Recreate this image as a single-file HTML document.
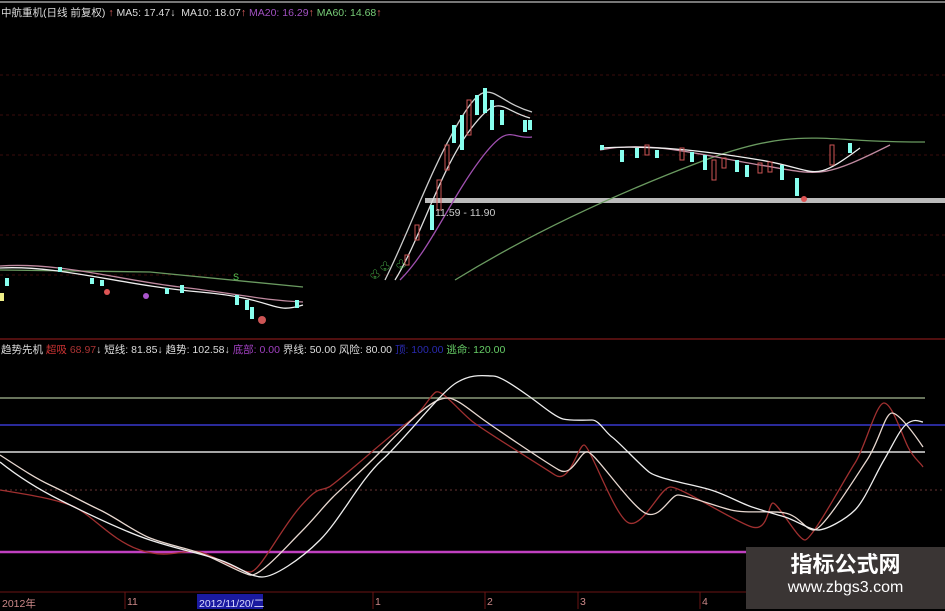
<!DOCTYPE html>
<html><head><meta charset="utf-8"><style>
html,body{margin:0;padding:0;background:#000;}
body{width:945px;height:609px;overflow:hidden;position:relative;font-family:"Liberation Sans","Noto Sans CJK SC",sans-serif;}
.t{position:absolute;font-size:10.5px;white-space:nowrap;color:#ddd;}
.wm{position:absolute;left:746px;top:547px;width:199px;height:62px;background:#3a3534;text-align:center;color:#fff;}
</style></head><body>
<svg width="945" height="609" style="position:absolute;left:0;top:0">
<line x1="0" y1="2" x2="945" y2="2" stroke="#777" stroke-width="2"/>
<g stroke="#3a0c0c" stroke-width="1" stroke-dasharray="3,3">
<line x1="0" y1="75" x2="945" y2="75"/><line x1="0" y1="115" x2="945" y2="115"/>
<line x1="0" y1="155" x2="945" y2="155"/><line x1="0" y1="235" x2="945" y2="235"/>
<line x1="0" y1="275" x2="945" y2="275"/>
</g>
<line x1="0" y1="339" x2="945" y2="339" stroke="#6a1414" stroke-width="1.5"/>
<rect x="425" y="198" width="520" height="5" fill="#bbb"/>
<g fill="none" stroke-width="1.3">
<path d="M0,270 L150,272 L303,287" stroke="#6a9a60"/>
<path d="M0,266 C60,262 120,280 180,287 S260,300 303,302" stroke="#c08aa0"/>
<path d="M0,268 C60,265 120,285 200,292 S270,315 303,305" stroke="#eee"/>
<path d="M455,280 C520,240 600,200 700,162 S820,143 925,142" stroke="#6a9a60"/>
<path d="M400,280 C430,250 450,200 480,160 S510,140 532,137" stroke="#a050b0"/>
<path d="M395,280 C420,240 440,170 470,130 S500,110 530,118" stroke="#ddd"/>
<path d="M385,280 C410,230 430,170 460,120 S490,100 532,112" stroke="#ccc"/>
<path d="M600,150 C650,140 700,155 760,165 S820,180 890,145" stroke="#c08aa0"/>
<path d="M600,148 C650,145 700,150 760,160 S810,185 860,148" stroke="#eee"/>
</g>
<g stroke-width="1">
<rect x="430" y="205" width="4" height="25" fill="#8fe"/><rect x="437" y="180" width="4" height="30" fill="none" stroke="#c55"/>
<rect x="445" y="145" width="4" height="25" fill="none" stroke="#c55"/><rect x="452" y="125" width="4" height="18" fill="#8fe"/>
<rect x="460" y="115" width="4" height="35" fill="#8fe"/><rect x="467" y="100" width="4" height="35" fill="none" stroke="#c55"/>
<rect x="475" y="95" width="4" height="20" fill="#8fe"/><rect x="483" y="88" width="4" height="25" fill="#8fe"/>
<rect x="490" y="100" width="4" height="30" fill="#8fe"/><rect x="500" y="110" width="4" height="15" fill="#8fe"/>
<rect x="523" y="120" width="4" height="12" fill="#8fe"/><rect x="528" y="120" width="4" height="10" fill="#8fe"/>
<rect x="415" y="225" width="4" height="15" fill="none" stroke="#c55"/><rect x="405" y="255" width="4" height="10" fill="none" stroke="#c55"/>
<rect x="620" y="150" width="4" height="12" fill="#8fe"/><rect x="635" y="148" width="4" height="10" fill="#8fe"/>
<rect x="645" y="145" width="4" height="10" fill="none" stroke="#c55"/><rect x="655" y="150" width="4" height="8" fill="#8fe"/>
<rect x="680" y="148" width="4" height="12" fill="none" stroke="#c55"/><rect x="690" y="152" width="4" height="10" fill="#8fe"/>
<rect x="703" y="155" width="4" height="15" fill="#8fe"/><rect x="712" y="160" width="4" height="20" fill="none" stroke="#c55"/>
<rect x="722" y="158" width="4" height="10" fill="none" stroke="#c55"/><rect x="735" y="160" width="4" height="12" fill="#8fe"/>
<rect x="745" y="165" width="4" height="12" fill="#8fe"/><rect x="758" y="163" width="4" height="10" fill="none" stroke="#c55"/>
<rect x="768" y="162" width="4" height="10" fill="none" stroke="#c55"/><rect x="780" y="165" width="4" height="15" fill="#8fe"/>
<rect x="795" y="178" width="4" height="18" fill="#8fe"/><rect x="848" y="143" width="4" height="10" fill="#8fe"/>
<rect x="830" y="145" width="4" height="20" fill="none" stroke="#c55"/>
<rect x="600" y="145" width="4" height="5" fill="#8fe"/><rect x="58" y="267" width="4" height="5" fill="#8fe"/>
<rect x="250" y="307" width="4" height="12" fill="#8fe"/><rect x="0" y="293" width="4" height="8" fill="#ee8"/>
<rect x="235" y="295" width="4" height="10" fill="#8fe"/><rect x="245" y="300" width="4" height="10" fill="#8fe"/>
<rect x="180" y="285" width="4" height="8" fill="#8fe"/><rect x="165" y="288" width="4" height="6" fill="#8fe"/>
<rect x="100" y="280" width="4" height="6" fill="#8fe"/><rect x="90" y="278" width="4" height="6" fill="#8fe"/>
<rect x="295" y="300" width="4" height="8" fill="#8fe"/><rect x="5" y="278" width="4" height="8" fill="#8fe"/>
</g>
<circle cx="804" cy="199" r="3" fill="#d55"/>
<circle cx="107" cy="292" r="3" fill="#d55"/><circle cx="146" cy="296" r="3" fill="#a5c"/>
<circle cx="262" cy="320" r="4" fill="#c55"/><text x="233" y="280" fill="#5c5" font-size="9">S</text>
<text x="380" y="270" fill="#5c5" font-size="10">♧</text><text x="396" y="268" fill="#5c5" font-size="10">♧</text><text x="370" y="278" fill="#5c5" font-size="10">♧</text>
<line x1="0" y1="398" x2="925" y2="398" stroke="#8a9a7a" stroke-width="1.5"/>
<line x1="0" y1="425" x2="945" y2="425" stroke="#2a2a9a" stroke-width="2"/>
<line x1="0" y1="452" x2="925" y2="452" stroke="#ddd" stroke-width="1.5"/>
<line x1="0" y1="490" x2="945" y2="490" stroke="#6a3535" stroke-width="1" stroke-dasharray="2,3"/>
<line x1="0" y1="552" x2="746" y2="552" stroke="#c040c0" stroke-width="2.5"/>
<line x1="0" y1="592" x2="945" y2="592" stroke="#6a1414" stroke-width="1"/>
<g fill="none" stroke-width="1.3" stroke-linejoin="round">
<path d="M0,490 C30,495 50,498 70,505 S110,540 140,550 S185,548 200,552 S240,572 250,572 S280,530 300,507 S320,492 329,487 S390,435 407,423 S430,395 436,392 S460,412 473,422 S540,465 555,475 S578,445 584,445 S615,518 629,523 S660,488 670,487 S735,522 752,527 S768,503 773,503 S798,540 805,540 S845,478 855,463 S876,403 884,403 S902,435 908,447 S920,462 923,467" stroke="#a03030"/>
<path d="M0,455 C20,468 35,478 50,485 S85,503 100,510 S135,532 150,538 S185,548 200,553 S240,573 250,575 S285,548 300,533 S322,508 333,497 S365,468 382,450 S413,418 423,410 S440,398 448,398 S470,410 481,418 S545,462 559,470 S580,450 588,452 S630,505 645,513 S670,495 678,495 S715,506 731,510 S770,510 785,513 S805,530 814,530 S855,478 867,460 S885,413 892,413 S915,435 923,447" stroke="#e8d8d0"/>
<path d="M0,462 C20,478 40,490 60,500 S120,530 150,540 S200,553 220,560 S250,577 262,577 S300,560 320,540 S360,480 382,460 S440,393 456,383 S485,376 493,376 S520,390 530,397 S555,417 563,419 S585,420 592,420 S605,432 612,437 S640,465 649,472 S695,485 711,490 S740,503 752,507 S775,514 785,517 S810,530 818,530 S845,520 855,510 S875,475 884,460 S900,428 908,423 S920,422 923,422" stroke="#eee"/>
</g>
<rect x="197" y="594" width="66" height="15" fill="#1a1aa0"/>
<g stroke="#6a1414"><line x1="125" y1="592" x2="125" y2="609"/><line x1="373" y1="592" x2="373" y2="609"/><line x1="485" y1="592" x2="485" y2="609"/><line x1="578" y1="592" x2="578" y2="609"/><line x1="700" y1="592" x2="700" y2="609"/></g>
</svg>
<div class="t" style="left:1px;top:5px">中航重机(日线 前复权) <span style="color:#e66">↑</span> MA5: 17.47<span>↓</span> &nbsp;MA10: 18.07<span style="color:#e66">↑</span> <span style="color:#a050c0">MA20: 16.29</span><span style="color:#e66">↑</span> <span style="color:#7c7">MA60: 14.68</span><span style="color:#e66">↑</span></div>
<div class="t" style="left:435px;top:207px;color:#ccc">11.59 - 11.90</div>
<div class="t" style="left:1px;top:342px">趋势先机 <span style="color:#c33">超吸</span> <span style="color:#a33">68.97</span>↓ 短线: 81.85↓ 趋势: 102.58↓ <span style="color:#a040c0">底部: 0.00</span> 界线: 50.00 风险: 80.00 <span style="color:#2a2ab0">顶: 100.00</span> <span style="color:#6c6">逃命: 120.00</span></div>
<div class="t" style="left:2px;top:596px;color:#c88">2012年</div>
<div class="t" style="left:127px;top:596px;color:#c88">11</div>
<div class="t" style="left:199px;top:596px;color:#ddf">2012/11/20/二</div>
<div class="t" style="left:375px;top:596px;color:#c88">1</div>
<div class="t" style="left:487px;top:596px;color:#c88">2</div>
<div class="t" style="left:580px;top:596px;color:#c88">3</div>
<div class="t" style="left:702px;top:596px;color:#c88">4</div>
<div class="wm"><div style="font-size:22px;font-weight:bold;margin-top:5px;line-height:26px">指标公式网</div><div style="font-size:16px;line-height:20px">www.zbgs3.com</div></div>
</body></html>
